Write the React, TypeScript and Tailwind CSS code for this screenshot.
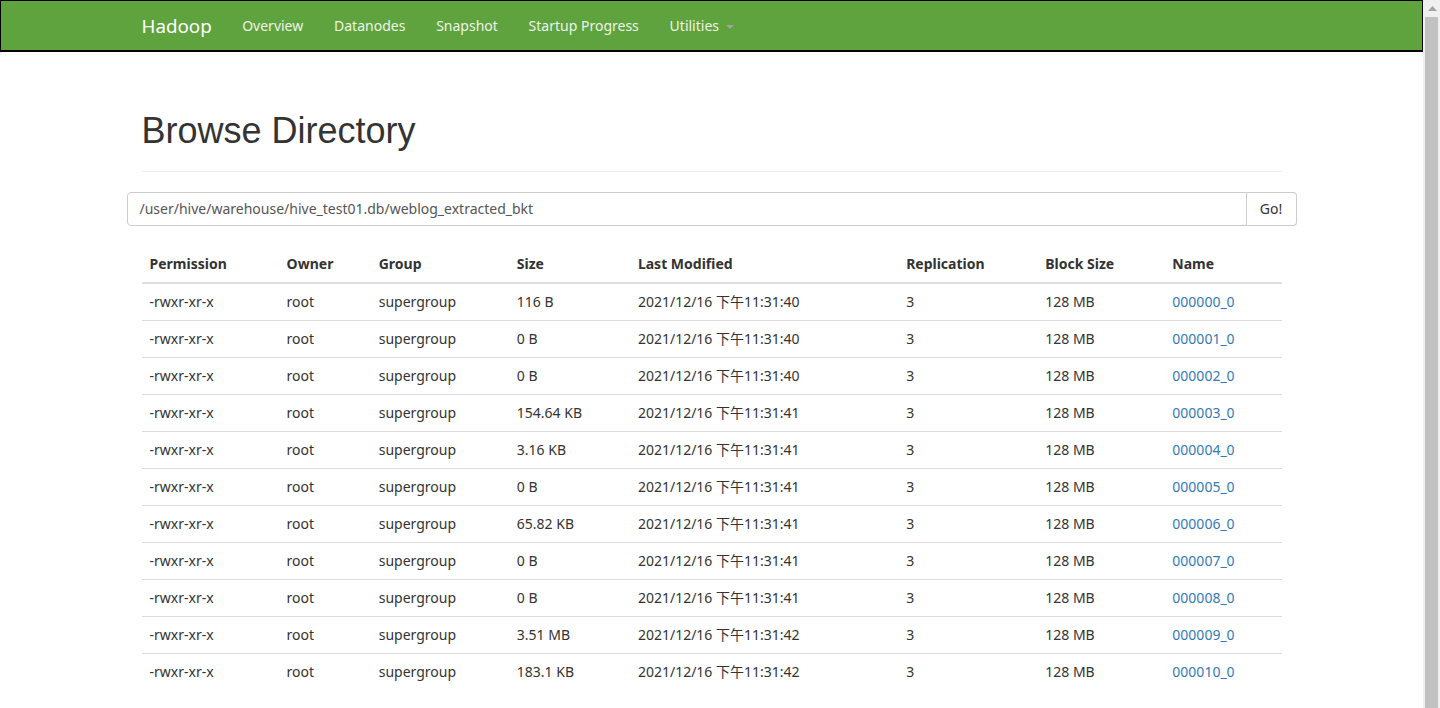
import React from 'react'

const NAV = ['Overview', 'Datanodes', 'Snapshot', 'Startup Progress']

const COLS = [
  { label: 'Permission', w: 'w-[137px]' },
  { label: 'Owner', w: 'w-[92px]' },
  { label: 'Group', w: 'w-[138px]' },
  { label: 'Size', w: 'w-[121px]' },
  { label: 'Last Modified', w: 'w-[268px]' },
  { label: 'Replication', w: 'w-[139px]' },
  { label: 'Block Size', w: 'w-[127px]' },
  { label: 'Name', w: 'w-[117px]' },
]

const ROWS = [
  { size: '116 B', time: '11:31:40' },
  { size: '0 B', time: '11:31:40' },
  { size: '0 B', time: '11:31:40' },
  { size: '154.64 KB', time: '11:31:41' },
  { size: '3.16 KB', time: '11:31:41' },
  { size: '0 B', time: '11:31:41' },
  { size: '65.82 KB', time: '11:31:41' },
  { size: '0 B', time: '11:31:41' },
  { size: '0 B', time: '11:31:41' },
  { size: '3.51 MB', time: '11:31:42' },
  { size: '183.1 KB', time: '11:31:42' },
]

export default function App() {
  return (
    <div
      className="flex h-[708px] w-[1440px] overflow-hidden bg-white text-[14px] text-[#333]"
      style={{ fontFamily: '"Noto Sans", "Noto Sans CJK SC", sans-serif' }}
    >
      <div className="flex w-[1423px] flex-col">
        {/* Navbar */}
        <nav className="h-[52px] shrink-0 border border-b-2 border-black bg-[#5fa33e]">
          <div className="mx-auto flex h-full w-[1170px] items-center px-[15px] pt-[1px]">
            <span className="pr-[15px] text-[18.8px] leading-[20px] text-white">Hadoop</span>
            {NAV.map(item => (
              <span key={item} className="px-[15.4px] text-[14px] leading-[20px] text-[#eef3e6]">
                {item}
              </span>
            ))}
            <span className="flex items-center px-[15.4px] text-[14px] leading-[20px] text-[#eef3e6]">
              Utilities
              <span className="ml-[7px] mt-[2px] h-0 w-0 border-x-[4px] border-t-[4px] border-x-transparent border-t-[#a3a3a3]" />
            </span>
          </div>
        </nav>

        {/* Content */}
        <div className="mx-auto w-[1170px] px-[15px]">
          <div className="mt-[59px] border-b border-[#eee] pb-[20px]">
            <h1
              className="text-[36px] leading-[39.6px] font-normal text-[#333]"
              style={{ fontFamily: '"Liberation Sans", Arial, sans-serif' }}
            >
              Browse Directory
            </h1>
          </div>

          <div className="-mx-[15px] mt-[20px] flex h-[34px]">
            <div className="flex flex-1 items-center rounded-l-[4px] border border-[#ccc] px-[12px] text-[14px] text-[#555]">
              /user/hive/warehouse/hive_test01.db/weblog_extracted_bkt
            </div>
            <div className="flex w-[50px] items-center justify-center rounded-r-[4px] border border-l-0 border-[#ccc] text-[14px] text-[#333]">
              Go!
            </div>
          </div>

          <table className="mt-[20px] w-full table-fixed border-collapse">
            <thead>
              <tr className="border-b-2 border-[#ddd]">
                {COLS.map(c => (
                  <th key={c.label} className={`${c.w} p-[8px] text-left text-[14px] leading-[20px] font-bold`}>
                    {c.label}
                  </th>
                ))}
              </tr>
            </thead>
            <tbody>
              {ROWS.map((r, i) => {
                const name = `0000${String(i).padStart(2, '0')}_0`
                return (
                  <tr key={name} className={i > 0 ? 'border-t border-[#ddd]' : ''}>
                    <td className="p-[8px] leading-[20px]">-rwxr-xr-x</td>
                    <td className="p-[8px] leading-[20px]">root</td>
                    <td className="p-[8px] leading-[20px]">supergroup</td>
                    <td className="p-[8px] leading-[20px]">{r.size}</td>
                    <td className="p-[8px] leading-[20px]">2021/12/16 下午{r.time}</td>
                    <td className="p-[8px] leading-[20px]">3</td>
                    <td className="p-[8px] leading-[20px]">128 MB</td>
                    <td className="p-[8px] leading-[20px] text-[#337ab7]">{name}</td>
                  </tr>
                )
              })}
            </tbody>
          </table>
        </div>
      </div>

      {/* Scrollbar */}
      <div className="flex w-[17px] shrink-0 flex-col bg-[#f0f0f0] pl-[2px]">
        <div className="flex h-[17px] items-center justify-center">
          <svg width="9" height="5" viewBox="0 0 9 5">
            <path d="M0 5 L4.5 0 L9 5 Z" fill="#a3a3a3" />
          </svg>
        </div>
        <div className="mr-[2px] flex-1 bg-[#c1c1c1]" />
      </div>
    </div>
  )
}
